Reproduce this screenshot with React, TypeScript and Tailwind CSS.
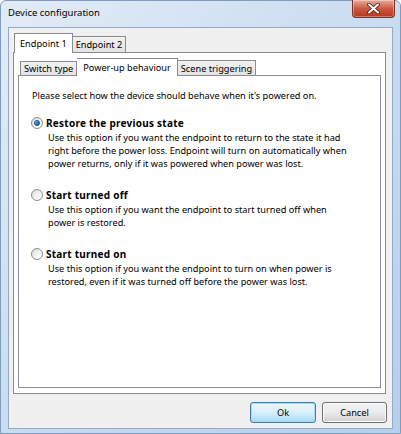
const OPTIONS = [
  {
    id: 'restore',
    label: 'Restore the previous state',
    lines: [
      'Use this option if you want the endpoint to return to the state it had',
      'right before the power loss. Endpoint will turn on automatically when',
      'power returns, only if it was powered when power was lost.',
    ],
  },
  {
    id: 'off',
    label: 'Start turned off',
    lines: ['Use this option if you want the endpoint to start turned off when', 'power is restored.'],
  },
  {
    id: 'on',
    label: 'Start turned on',
    lines: [
      'Use this option if you want the endpoint to turn on when power is',
      'restored, even if it was turned off before the power was lost.',
    ],
  },
];

function Radio({ checked }: { checked: boolean }) {
  return (
    <span className="flex h-[12px] w-[12px] shrink-0 items-center justify-center rounded-full border border-[#8d8d8d] bg-gradient-to-br from-[#d8d8d8] via-[#f2f2f2] to-[#ffffff]">
      {checked && (
        <span className="h-[6px] w-[6px] rounded-full border border-[#1a4f8a] bg-gradient-to-br from-[#8fd0f5] via-[#2b86cf] to-[#0d4a91]" />
      )}
    </span>
  );
}

function CloseButton() {
  return (
    <div className="flex h-[18px] w-[43px] items-center justify-center rounded-b-[4px] border border-t-0 border-[#7a3226] bg-gradient-to-b from-[#e9ac9e] via-[#cc5842] to-[#b83519] shadow-[inset_0_0_0_1px_rgba(255,255,255,0.35)]">
      <svg width="13" height="11" viewBox="0 0 13 11">
        <path d="M2 1.5 L11 9.5 M11 1.5 L2 9.5" stroke="#4a1a12" strokeWidth="3.6" strokeLinecap="round" />
        <path d="M2 1.5 L11 9.5 M11 1.5 L2 9.5" stroke="#ffffff" strokeWidth="2" strokeLinecap="round" />
      </svg>
    </div>
  );
}

export default function App() {
  return (
    <div className="h-[434px] w-[401px] bg-white font-['Noto_Sans',sans-serif] text-[9.2px] leading-[13px] text-black">
      <div className="flex h-[434px] w-[401px] flex-col rounded-t-[6px] border border-[#7d9cc0] bg-gradient-to-br from-[#e2ecf7] via-[#cadcf0] to-[#b6cfea] px-[7px] pb-[4px]">
        {/* Title bar */}
        <div className="flex h-[26px] items-start justify-between">
          <span className="pt-[5px] text-[9.5px] text-black">Device configuration</span>
          <div className="-mt-px mr-[-2px]">
            <CloseButton />
          </div>
        </div>

        {/* Client area */}
        <div className="flex flex-1 flex-col border border-[#94abc7] bg-[#f0f0f0] px-[4px] pt-[5px]">
          {/* Outer tabs */}
          <div className="flex items-end pl-px">
            <div className="relative z-10 -mb-px flex h-[20px] items-center border border-b-0 border-[#898c95] bg-white px-[5px]">
              Endpoint 1
            </div>
            <div className="flex h-[16px] items-center border border-b-0 border-l-0 border-[#898c95] bg-gradient-to-b from-[#f2f2f2] to-[#e3e3e3] px-[3px]">
              Endpoint 2
            </div>
          </div>

          {/* Outer panel */}
          <div className="flex h-[342px] w-[373px] flex-col border border-[#898c95] bg-white px-[4px] pt-[5px]">
            {/* Inner tabs */}
            <div className="flex items-end pl-[2px]">
              <div className="flex h-[14px] items-center border border-b-0 border-[#898c95] bg-gradient-to-b from-[#f2f2f2] to-[#e3e3e3] px-[3px]">
                Switch type
              </div>
              <div className="relative z-10 -mb-px flex h-[18px] items-center border border-b-0 border-l-0 border-[#898c95] bg-white px-[6px]">
                Power-up behaviour
              </div>
              <div className="flex h-[15px] items-center border border-b-0 border-l-0 border-[#898c95] bg-gradient-to-b from-[#f2f2f2] to-[#e3e3e3] px-[3px]">
                Scene triggering
              </div>
            </div>

            {/* Inner panel */}
            <div className="h-[313px] w-[363px] border border-[#898c95] bg-white pl-[13px] pt-[13px]">
              <p>Please select how the device should behave when it&apos;s powered on.</p>

              {OPTIONS.map((opt, i) => (
                <div key={opt.id} className={i === 0 ? 'mt-[14px]' : 'mt-[18px]'}>
                  <div className="-ml-px flex h-[14px] items-center gap-[3px]">
                    <Radio checked={i === 0} />
                    <span className="text-[10px] font-bold tracking-[0.25px]">{opt.label}</span>
                  </div>
                  <div className="pl-[16px] pt-px">
                    {opt.lines.map((line) => (
                      <div key={line}>{line}</div>
                    ))}
                  </div>
                </div>
              ))}
            </div>
          </div>

          {/* Buttons */}
          <div className="mt-[8px] flex justify-end gap-[6px] pr-[1px]">
            <button className="h-[21px] w-[66px] rounded-[3px] border border-[#3c7fb1] bg-gradient-to-b from-[#eaf6fd] via-[#d9f0fc] to-[#a7d9f5] text-[9.2px] shadow-[inset_0_0_0_1px_#a6dcf7]">
              Ok
            </button>
            <button className="h-[21px] w-[65px] rounded-[3px] border border-[#707070] bg-gradient-to-b from-[#f2f2f2] via-[#ebebeb] to-[#cfcfcf] text-[9.2px] shadow-[inset_0_0_0_1px_#fcfcfc]">
              Cancel
            </button>
          </div>
        </div>
      </div>
    </div>
  );
}
